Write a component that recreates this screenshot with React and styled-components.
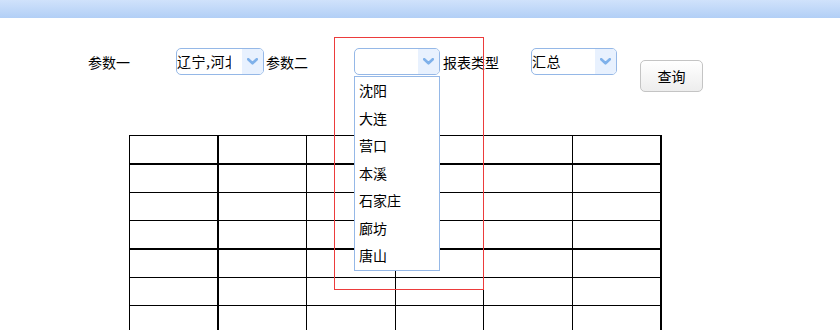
import React from "react";
import styled, { createGlobalStyle } from "styled-components";

const Global = createGlobalStyle`
  html, body { margin: 0; padding: 0; background: #fff; overflow: hidden; }
  body { font-family: "Noto Sans CJK SC", "Noto Sans", sans-serif; font-size: 14px; color: #000; }
`;

const TopBar = styled.div`
  height: 18px;
  background: linear-gradient(to bottom, #d0e2fb 0%, #b2cff6 100%);
`;

const FormRow = styled.div`
  display: flex;
  align-items: flex-start;
  margin-top: 30px;
  padding-left: 88px;
`;

const Label = styled.div`
  width: ${(p) => p.$w}px;
  padding-left: ${(p) => p.$pl || 0}px;
  box-sizing: border-box;
  height: 27px;
  line-height: 28px;
  white-space: nowrap;
`;

const ComboWrap = styled.div`
  position: relative;
  width: ${(p) => p.$w}px;
`;

const Combo = styled.div`
  display: flex;
  height: 27px;
  box-sizing: border-box;
  border: 1px solid #95b8e7;
  border-radius: 5px;
  overflow: hidden;
  background: #fff;
`;

const ComboText = styled.div`
  flex: 1;
  min-width: 0;
  overflow: hidden;
  margin-right: 11px;
`;

const ComboTextInner = styled.div`
  white-space: nowrap;
  overflow: hidden;
  line-height: 25px;
  letter-spacing: 0.5px;
`;

const ComboArrow = styled.div`
  flex: none;
  width: 21px;
  background: #e8f1fe;
  display: flex;
  align-items: center;
  justify-content: center;
`;

const Button = styled.button`
  margin-left: 23px;
  margin-top: 12px;
  width: 63px;
  height: 32px;
  border: 1px solid #c4c4c4;
  border-radius: 5px;
  background: linear-gradient(to bottom, #ffffff 0%, #ededed 100%);
  font-family: inherit;
  font-size: 14px;
  color: #000;
  padding: 0;
`;

const DropList = styled.div`
  position: absolute;
  top: 28px;
  left: 0;
  width: 86px;
  box-sizing: border-box;
  border: 1px solid #95b8e7;
  background: #fff;
  z-index: 5;
`;

const DropItem = styled.div`
  height: 27.5px;
  line-height: 27.5px;
  padding-left: 4px;
  white-space: nowrap;
`;

const RedBox = styled.div`
  position: absolute;
  left: -20px;
  top: -11px;
  width: 150px;
  height: 253px;
  box-sizing: border-box;
  border: 1px solid #ec3b3b;
  pointer-events: none;
  z-index: 6;
`;

const Grid = styled.div`
  margin-top: 43px;
  margin-left: 129px;
  display: grid;
  grid-template-columns: 89px 88px 89px 88px 89px 89px;
  width: 532px;
  border-top: 1px solid #000;
  border-left: 1px solid #000;
`;

const Cell = styled.div`
  height: 27px;
  border-right: ${(p) => (p.$thickR ? 2 : 1)}px solid #000;
  border-bottom: ${(p) => (p.$thickB ? 2 : 1)}px solid #000;
`;

const Chevron = () => (
  <svg width="11" height="7" viewBox="0 0 11 7">
    <path d="M1.2 1.2 L5.5 5.3 L9.8 1.2" fill="none" stroke="#7fb1ea" strokeWidth="2.6" strokeLinecap="round" strokeLinejoin="round" />
  </svg>
);

const ComboBox = ({ w, value, children }) => (
  <ComboWrap $w={w}>
    <Combo>
      <ComboText>
        <ComboTextInner>{value}</ComboTextInner>
      </ComboText>
      <ComboArrow>
        <Chevron />
      </ComboArrow>
    </Combo>
    {children}
  </ComboWrap>
);

const cities = ["沈阳", "大连", "营口", "本溪", "石家庄", "廊坊", "唐山"];

export default function App() {
  const rows = Array.from({ length: 8 });
  const cols = Array.from({ length: 6 });
  return (
    <>
      <Global />
      <TopBar />
      <FormRow>
        <Label $w={88}>参数一</Label>
        <ComboBox w={88} value="辽宁,河北" />
        <Label $w={90} $pl={2}>参数二</Label>
        <ComboBox w={86} value="">
          <DropList>
            {cities.map((c) => (
              <DropItem key={c}>{c}</DropItem>
            ))}
          </DropList>
          <RedBox />
        </ComboBox>
        <Label $w={91} $pl={3}>报表类型</Label>
        <ComboBox w={86} value="汇总" />
        <Button>查询</Button>
      </FormRow>
      <Grid>
        {rows.map((_, r) =>
          cols.map((_, c) => (
            <Cell key={`${r}-${c}`} $thickR={c === 0 || c === 5} $thickB={r % 3 === 0} />
          ))
        )}
      </Grid>
    </>
  );
}
